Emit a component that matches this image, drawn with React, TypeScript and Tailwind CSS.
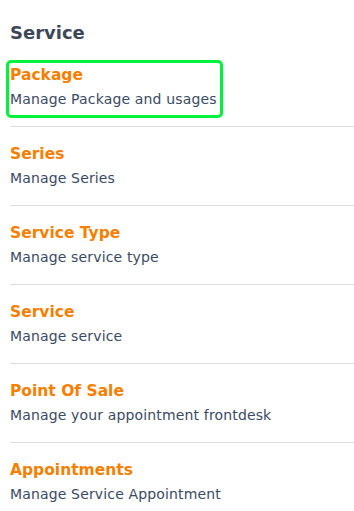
import React from 'react';

interface ServiceItem {
  title: string;
  description: string;
}

const items: ServiceItem[] = [
  { title: 'Package', description: 'Manage Package and usages' },
  { title: 'Series', description: 'Manage Series' },
  { title: 'Service Type', description: 'Manage service type' },
  { title: 'Service', description: 'Manage service' },
  { title: 'Point Of Sale', description: 'Manage your appointment frontdesk' },
  { title: 'Appointments', description: 'Manage Service Appointment' },
];

export default function App() {
  return (
    <div
      className="h-[511px] w-[354px] overflow-hidden bg-white pl-[10px] pt-[19px]"
      style={{ fontFamily: '"DejaVu Sans", "Open Sans", sans-serif' }}
    >
      <h2 className="mb-[1px] text-[18px] font-bold leading-[28px] text-[#3d4759]">Service</h2>

      <ul>
        {items.map((item, i) => (
          <li
            key={item.title}
            className={`py-[15px] ${i < items.length - 1 ? 'border-b border-[#dedede]' : ''}`}
          >
            <a
              href="#"
              className={`-mb-[4px] -ml-[1px] flex w-fit flex-col pb-[4px] pl-[1px] pr-[3px] ${
                i === 0 ? 'rounded-[2px] outline-[3px] outline-offset-0 outline-[#00f23c] outline-solid' : ''
              }`}
            >
              <span className="text-[15.5px] font-bold leading-[24px] text-[#f77f00]">{item.title}</span>
              <span className="text-[14px] leading-[24px] tracking-[0.15px] text-[#3b4a63]">
                {item.description}
              </span>
            </a>
          </li>
        ))}
      </ul>
    </div>
  );
}
